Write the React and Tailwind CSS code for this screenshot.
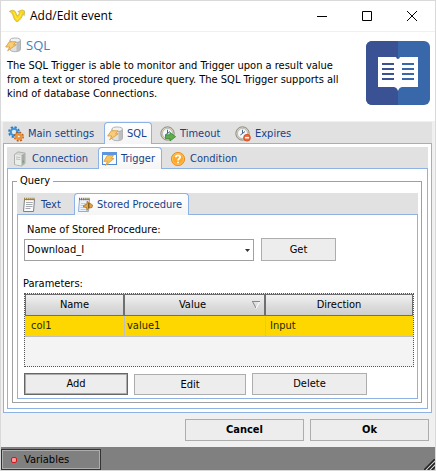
import React from "react";

function LogoIcon() {
  return (
    <svg width="16" height="14" viewBox="0 0 16 14" aria-hidden="true">
      <path d="M.4 2.400C2 .9 4.800.9 6.300 2.500 7.300 3.800 7.500 5.500 8.300 7 9.300 6.200 10.200 5 10.500 3.600L8.800 2.600 13 .9 15.600 1.900 15.300 6.600 13.800 5.300C13 8.600 11 11.600 8 12.800 5.400 11.800 4.500 8.300 3.600 5.600 3 4 1.800 3.200.4 2.400Z" fill="#fbd40c" stroke="#b9a648" strokeWidth=".6" />
      <path d="M4.500 3C5.800 5 6.300 8.500 8.200 10.500 10.500 9 11.800 6.500 12.300 3.500" fill="none" stroke="#ffe640" strokeWidth="1.200" />
    </svg>
  );
}

function SqlIcon() {
  return (
    <svg width="16" height="16" viewBox="0 0 16 16" aria-hidden="true">
      <path d="M5 3.200v9.300c0 1.300 2.300 2.200 5.200 2.200s5.300-.9 5.300-2.200V3.200Z" fill="#e0e0e0" stroke="#a2a2a2" strokeWidth=".8" />
      <path d="M11.500 5v9.300c2.200-.2 3.600-.9 3.600-1.800V4Z" fill="#bdbdbd" />
      <ellipse cx="10.200" cy="3.200" rx="5.200" ry="2.200" fill="#f1f1f1" stroke="#a2a2a2" strokeWidth=".8" />
      <path d="M4.300 4.800H11L8.400 7.800H11.200L2.600 13.800 4.800 10H.7Z" fill="#f8cd74" stroke="#dba044" strokeWidth=".9" strokeLinejoin="round" />
    </svg>
  );
}

function BookIcon() {
  return (
    <svg width="64" height="64" viewBox="0 0 64 64" role="img" aria-label="Manual" className="shrink-0">
      <rect width="64" height="64" rx="6" fill="#3867aa" />
      <path d="M6 0H32V64H6a6 6 0 0 1-6-6V6a6 6 0 0 1 6-6Z" fill="#3a5293" />
      <path d="M12 16H30Q30.500 18 32 18T34 16H52V46H36Q33 46.500 32 50 31 46.500 28 46H12Z" fill="#fff" />
      <path d="M16 23H28M16 28H28M16 33H28M16 38H28" stroke="#3a5293" strokeWidth="2" />
      <path d="M36 23H48M36 28H48M36 33H48M36 38H48" stroke="#3867aa" strokeWidth="2" />
    </svg>
  );
}

function GearsIcon() {
  return (
    <svg width="16" height="16" viewBox="0 0 16 16" aria-hidden="true">
      <circle cx="6" cy="6" r="5" fill="none" stroke="#2c7cc4" strokeWidth="1.800" strokeDasharray="2.200 1.727" />
      <circle cx="6" cy="6" r="3.300" fill="#d6ebfa" stroke="#3f93d6" strokeWidth="2.200" />
      <circle cx="10.800" cy="10.500" r="4.300" fill="none" stroke="#b9591a" strokeWidth="1.600" strokeDasharray="1.900 1.477" />
      <circle cx="10.800" cy="10.500" r="2.700" fill="#fff1dc" stroke="#ef9434" strokeWidth="2.200" />
      <circle cx="10.800" cy="10.500" r="1.400" fill="#fff6e8" stroke="#b9591a" strokeWidth=".6" />
    </svg>
  );
}

function Clock() {
  return (
    <>
      <circle cx="7.500" cy="7.500" r="6.700" fill="#e0d2b4" stroke="#8b8272" strokeWidth=".9" />
      <circle cx="7.500" cy="7.500" r="5" fill="#f3f8fd" stroke="#9caab8" strokeWidth=".7" />
      <path d="M7.500 3.800V7.500L5.300 9M7.500 7.500L10 5.500" fill="none" stroke="#4a6484" strokeWidth="1" />
    </>
  );
}

function TimeoutIcon() {
  return (
    <svg width="16" height="16" viewBox="0 0 16 16" aria-hidden="true">
      <Clock />
      <path d="M5.500 8.800h4.500V6.500L15.600 10.700 10 15V12.600H5.500Z" fill="#5fae4c" stroke="#3a8430" strokeWidth=".8" />
    </svg>
  );
}

function ExpiresIcon() {
  return (
    <svg width="16" height="16" viewBox="0 0 16 16" aria-hidden="true">
      <Clock />
      <circle cx="12" cy="11.700" r="3.400" fill="#ee6a3a" stroke="#cd4a1e" strokeWidth=".8" />
      <path d="M10 11.700H14" stroke="#fff" strokeWidth="1.500" />
    </svg>
  );
}

function ServerIcon() {
  return (
    <svg width="16" height="16" viewBox="0 0 16 16" aria-hidden="true">
      <path d="M2.500 3.500 6 .9 13 2V12.500L9.500 15 2.500 13.500Z" fill="#d6d8d6" stroke="#a0a3a0" strokeWidth=".8" />
      <path d="M9.500 4.300 12.700 2.300V12.300L9.500 14.600Z" fill="#a7aaa7" />
      <path d="M3 3.800 9.200 4.700V14.500L3 13.200Z" fill="#ebedeb" />
      <path d="M4 6 8.300 6.600M4 8 8.300 8.600" stroke="#b4b8b4" strokeWidth=".9" />
      <rect x="10.500" y="9.500" width="1.500" height="2" fill="#5db850" />
    </svg>
  );
}

function TriggerIcon() {
  return (
    <svg width="16" height="16" viewBox="0 0 16 16" aria-hidden="true">
      <rect x="1.500" y="1.500" width="14" height="12" fill="#f7fafe" stroke="#5288cd" />
      <path d="M1 1H16V4H1Z" fill="#5d96de" />
      <path d="M6.300 4.500H12.500L10.200 7.500H13L4.500 14.500 6.600 10.300H2.800Z" fill="#f8c55c" stroke="#dba044" strokeWidth=".9" strokeLinejoin="round" />
    </svg>
  );
}

function QuestionIcon() {
  return (
    <svg width="16" height="16" viewBox="0 0 16 16" aria-hidden="true">
      <circle cx="8" cy="8" r="6.600" fill="#fba92a" stroke="#ea8f1c" />
      <circle cx="8" cy="8" r="5.500" fill="none" stroke="#fdc769" strokeWidth=".8" />
      <path d="M5.800 6.300Q5.800 4.300 8 4.300T10.200 6.200C10.200 7.700 8 7.800 8 9.500M8 10.700V12.300" fill="none" stroke="#fff" strokeWidth="1.700" />
    </svg>
  );
}

function NotepadIcon() {
  return (
    <svg width="16" height="16" viewBox="0 0 16 16" aria-hidden="true">
      <path d="M3.500 2.500H13.500L12.500 14.500H2.500Z" fill="#fbfbfb" stroke="#7c8086" />
      <path d="M5 5.500H11.800M5 7.500H11.500M4.800 9.500H11.500M4.600 11.500H9.500" stroke="#9a9fa6" strokeWidth=".9" />
      <path d="M3 2H14" stroke="#9d8140" strokeWidth="2.600" strokeDasharray="1.200 .9" />
    </svg>
  );
}

function ProcedureIcon() {
  return (
    <svg width="16" height="16" viewBox="0 0 16 16" aria-hidden="true">
      <path d="M2.500 2.500H12.500L11.500 14.500H1.500Z" fill="#e9f2fb" stroke="#8fb0d5" />
      <path d="M4 6.500H9M3.500 8.500H7M3.500 10.500H7M3.500 12.500H9" stroke="#b3cbe4" strokeWidth=".9" />
      <path d="M2 2H13" stroke="#7d6a48" strokeWidth="2.400" strokeDasharray="1.200 .9" />
      <path d="M6.500 8.500 10 7V4.300L12.500 6 15.500 8 15 10.500 12 11 10 13.500 9.500 10.500 6.500 10Z" fill="#e5a443" stroke="#a36f28" strokeWidth=".8" />
      <path d="M11.800 6V11" stroke="#6f4c1d" strokeWidth="1.200" />
    </svg>
  );
}

function TabStrip({ label, tabs }) {
  return (
    <div role="tablist" aria-label={label} className="flex h-[21px] bg-[#e1e1e1]">
      {tabs.map(({ name, icon, active, className }) => (
        <button
          key={name}
          type="button"
          role="tab"
          aria-selected={Boolean(active)}
          className={
            "flex shrink-0 items-center gap-1 whitespace-nowrap text-[#15428b] " +
            (active
              ? "z-10 h-[22px] rounded-t-sm border border-b-0 border-[#8db2e3] bg-linear-to-b from-white to-[#f5f5f5] pt-px pl-0.5 "
              : "h-[21px] pt-[3px] ") +
            className
          }
        >
          {icon}
          <span>{name}</span>
        </button>
      ))}
    </div>
  );
}

function PushButton({ className, children }) {
  return (
    <button type="button" className={"border bg-[#ededed] text-center " + className}>
      {children}
    </button>
  );
}

function TitleBar() {
  return (
    <header className="flex h-[31px] items-center border-b border-[#f0f0f0] bg-white pl-2 font-['Open_Sans',sans-serif] text-xs">
      <LogoIcon />
      <h1 className="ml-[5px] flex-1">Add/Edit event</h1>
      <button type="button" aria-label="Minimize" className="flex h-full w-[46px] items-center justify-center">
        <svg width="10" height="11" viewBox="0 0 10 11"><path d="M0 5.500H10" stroke="#000" /></svg>
      </button>
      <button type="button" aria-label="Maximize" className="flex h-full w-11 items-center justify-center">
        <svg width="10" height="10" viewBox="0 0 10 10"><path d="M.5 .5H9.500V9.500H.5Z" fill="none" stroke="#000" /></svg>
      </button>
      <button type="button" aria-label="Close" className="flex h-full w-[46px] items-center justify-center">
        <svg width="10" height="10" viewBox="0 0 10 10"><path d="M0 0 10 10M10 0 0 10" stroke="#000" /></svg>
      </button>
    </header>
  );
}

function ParameterTable() {
  const head = "border-y border-[#6f6f6f] bg-linear-to-b from-[#f2f2f2] via-[#dedede] to-[#cfcfcf] font-normal";
  return (
    <div className="mr-[3px] ml-1.5 h-[74px] border border-dotted border-[#555] bg-[#f4f4f4]">
      <table className="w-full table-fixed border-separate border-spacing-0">
        <colgroup>
          <col className="w-[100px]" />
          <col className="w-[141px]" />
          <col />
        </colgroup>
        <thead>
          <tr className="h-[22px]">
            <th className={head + " border-r-2 border-l"}>Name</th>
            <th className={head + " border-r-2"} aria-sort="descending">
              <span className="flex items-center pr-1">
                <span className="flex-1 pl-2">Value</span>
                <svg width="8" height="8" viewBox="0 0 8 8" aria-hidden="true">
                  <path d="M0 .5H8M.5 .5 4 7" fill="none" stroke="#888" />
                  <path d="M4 7.500 7.500 1" stroke="#fff" />
                </svg>
              </span>
            </th>
            <th className={head + " border-r"}>Direction</th>
          </tr>
        </thead>
        <tbody>
          <tr className="h-[21px] bg-[#ffd700] text-[#1c2a00]">
            <td className="border-r border-b border-[#c0c0c0] pl-1.5">col1</td>
            <td className="border-r border-b border-[#c0c0c0] pl-0.5">value1</td>
            <td className="border-b border-[#c0c0c0] pl-1">Input</td>
          </tr>
        </tbody>
      </table>
    </div>
  );
}

export default function App() {
  return (
    <div className="border border-[#d9d9d9] bg-[#f0f0f0] font-['DejaVu_Sans_Condensed','DejaVu_Sans',sans-serif] text-[11px] leading-[14px] text-black">
      <TitleBar />
      <section className="flex h-[89px] items-start justify-between bg-white pt-[5px] pr-[5px] pl-1">
        <div className="min-w-0">
          <h2 className="flex h-4 items-center gap-[5px] font-['Open_Sans',sans-serif] text-[13px] text-[#4580b8]">
            <SqlIcon />
            SQL
          </h2>
          <p className="mt-1.5 w-[350px] pl-0.5">
            The SQL Trigger is able to monitor and Trigger upon a result value
            <br />
            from a text or stored procedure query. The SQL Trigger supports all
            <br />
            kind of database Connections.
          </p>
        </div>
        <div className="mt-1">
          <BookIcon />
        </div>
      </section>

      <main className="pt-px pr-[3px] pl-0.5">
        <TabStrip
          label="Event"
          tabs={[
            { name: "Main settings", icon: <GearsIcon />, className: "w-[101px] pl-[5px]" },
            { name: "SQL", icon: <SqlIcon />, active: true, className: "w-12" },
            { name: "Timeout", icon: <TimeoutIcon />, className: "w-[75px] pl-2" },
            { name: "Expires", icon: <ExpiresIcon />, className: "w-[75px] pl-2" },
          ]}
        />
        <div className="border border-[#8db2e3] bg-white p-[3px]">
          <TabStrip
            label="SQL"
            tabs={[
              { name: "Connection", icon: <ServerIcon />, className: "w-[91px] pl-[5px]" },
              { name: "Trigger", icon: <TriggerIcon />, active: true, className: "w-16" },
              { name: "Condition", icon: <QuestionIcon />, className: "w-20 pl-2" },
            ]}
          />
          <div className="border border-[#8db2e3] pt-[5px] pr-[5px] pb-[5px] pl-1">
            <fieldset className="border border-[#a0a0a0] pt-[5px] pr-[3px] pb-[3px] pl-1">
              <legend className="px-[3px]">Query</legend>
              <TabStrip
                label="Query"
                tabs={[
                  { name: "Text", icon: <NotepadIcon />, className: "w-[57px] pl-1" },
                  { name: "Stored Procedure", icon: <ProcedureIcon />, active: true, className: "w-[115px]" },
                ]}
              />
              <div className="border border-[#8db2e3] pt-2 pb-[3px]">
                <label htmlFor="procedure" className="block pl-[9px]">
                  Name of Stored Procedure:
                </label>
                <div className="mt-px flex items-end gap-[7px] pl-1.5">
                  <div className="relative w-[230px]">
                    <select id="procedure" className="block h-[22px] w-full appearance-none border border-[#a0a0a0] bg-white pl-0.5">
                      <option>Download_I</option>
                    </select>
                    <svg width="5" height="3" viewBox="0 0 5 3" className="pointer-events-none absolute top-2.5 right-1" aria-hidden="true">
                      <path d="M0 0H5L2.500 3Z" fill="#333" />
                    </svg>
                  </div>
                  <PushButton className="h-[23px] w-[75px] border-[#adadad]">Get</PushButton>
                </div>
                <p className="mt-4 mb-0.5 pl-[5px]">Parameters:</p>
                <ParameterTable />
                <div className="mt-1.5 flex items-end pl-1.5">
                  <PushButton className="h-[22px] w-[104px] border-[#666] shadow-[inset_0_0_0_1px_#adadad]">Add</PushButton>
                  <PushButton className="ml-1.5 h-[21px] w-28 border-[#adadad]">Edit</PushButton>
                  <PushButton className="ml-1.5 h-[22px] w-[115px] border-[#adadad]">Delete</PushButton>
                </div>
              </div>
            </fieldset>
          </div>
        </div>
      </main>

      <div className="flex justify-end gap-1.5 py-1.5 pr-1.5">
        <PushButton className="h-[22px] w-[119px] border-[#adadad] font-bold">Cancel</PushButton>
        <PushButton className="h-[22px] w-[119px] border-[#adadad] font-bold">Ok</PushButton>
      </div>

      <footer className="flex h-[23px] items-end justify-between bg-[#808080]">
        <button type="button" className="flex h-[21px] w-[100px] items-center gap-[7px] border border-[#333] pl-[9px] shadow-[inset_0_0_0_1px_#adadad]">
          <span className="size-1.5 rounded-xs border border-[#d01818] bg-[#ff9b9b]" />
          Variables
        </button>
        <svg width="11" height="11" viewBox="0 0 11 11" aria-hidden="true">
          <path d="M0 11 11 0M4 11 11 4M8 11 11 8" stroke="#222" strokeWidth="1.500" />
          <path d="M2 11 11 2M6 11 11 6" stroke="#ccc" strokeWidth="1" />
        </svg>
      </footer>
    </div>
  );
}
